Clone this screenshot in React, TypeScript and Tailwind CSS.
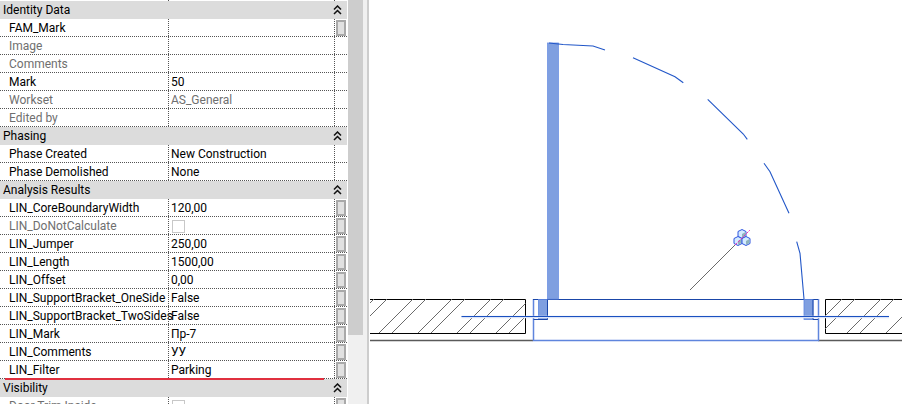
import type { JSX } from 'react';

type Row = { label: string; value?: string; muted?: boolean; button?: boolean; check?: boolean; mark?: boolean };
type Group = { title: string; rows: Row[] };

const groups: Group[] = [
  {
    title: 'Identity Data',
    rows: [
      { label: 'FAM_Mark', button: true },
      { label: 'Image', muted: true },
      { label: 'Comments', muted: true },
      { label: 'Mark', value: '50' },
      { label: 'Workset', value: 'AS_General', muted: true },
      { label: 'Edited by', muted: true },
    ],
  },
  {
    title: 'Phasing',
    rows: [
      { label: 'Phase Created', value: 'New Construction' },
      { label: 'Phase Demolished', value: 'None' },
    ],
  },
  {
    title: 'Analysis Results',
    rows: [
      { label: 'LIN_CoreBoundaryWidth', value: '120,00', button: true },
      { label: 'LIN_DoNotCalculate', muted: true, check: true, button: true },
      { label: 'LIN_Jumper', value: '250,00', button: true },
      { label: 'LIN_Length', value: '1500,00', button: true },
      { label: 'LIN_Offset', value: '0,00', button: true },
      { label: 'LIN_SupportBracket_OneSide', value: 'False', button: true },
      { label: 'LIN_SupportBracket_TwoSides', value: 'False', button: true },
      { label: 'LIN_Mark', value: 'Пр-7', button: true },
      { label: 'LIN_Comments', value: 'УУ', button: true },
      { label: 'LIN_Filter', value: 'Parking', button: true, mark: true },
    ],
  },
  {
    title: 'Visibility',
    rows: [{ label: 'Door Trim Inside', muted: true, check: true, button: true }],
  },
];

const dotted = 'border-dotted border-[#555]';

function Chevrons(): JSX.Element {
  return (
    <svg width="9" height="10" viewBox="0 0 9 10" fill="none" stroke="#111" strokeWidth="1.5">
      <path d="M1 4.5 4.5 1 8 4.5" />
      <path d="M1 9 4.5 5.5 8 9" />
    </svg>
  );
}

function Cells({ row }: { row?: Row }): JSX.Element {
  return (
    <div
      className={`relative flex h-[18px] shrink-0 border-b ${dotted} ${row?.muted ? 'text-[#6f6f6f]' : 'text-black'}`}
    >
      <div className="h-full w-[168px] shrink-0 pl-[9px] leading-[19px] whitespace-nowrap">{row?.label}</div>
      <div className={`h-full w-[166px] shrink-0 border-l ${dotted} pl-[2px] leading-[19px]`}>
        {row?.check ? <div className="mt-[3px] ml-[1px] size-[13px] border border-[#c8c8c8] bg-white" /> : row?.value}
      </div>
      <div className={`flex h-full flex-1 items-center justify-center border-l ${dotted}`}>
        {row?.button ? <div className="h-[16px] w-[10px] border-2 border-[#a9a9a9] bg-[#e1e1e1]" /> : null}
      </div>
      {row?.mark ? <div className="absolute top-[17px] left-[5px] h-[2px] w-[319px] bg-[#e0303f]" /> : null}
    </div>
  );
}

function PropertyPanel(): JSX.Element {
  return (
    <div className="flex h-full w-[347px] shrink-0 flex-col overflow-hidden">
      <div className="flex h-[1px] shrink-0">
        <div className="w-[168px]" />
        <div className={`w-[166px] border-l ${dotted}`} />
        <div className={`flex-1 border-l ${dotted}`} />
      </div>
      {groups.map((g) => (
        <div key={g.title} className="flex shrink-0 flex-col">
          <div className="flex h-[18px] shrink-0 items-center justify-between bg-[#dcdcdc] pr-[5px] pl-[3px] text-black">
            <span className="self-start leading-[19px]">{g.title}</span>
            <Chevrons />
          </div>
          {g.rows.map((r) => (
            <Cells key={r.label} row={r} />
          ))}
        </div>
      ))}
    </div>
  );
}

function Scrollbar(): JSX.Element {
  return (
    <div className="ml-[1px] flex h-full w-[19px] shrink-0 bg-[#f0f0f0]">
      <div className="h-[335px] w-[15px] bg-[#cdcdcd]" />
    </div>
  );
}

const hatches: number[][] = [
  [374, 299, 370, 303],
  [387, 299, 370, 316],
  [413, 299, 379, 333],
  [426, 299, 392, 333],
  [452, 299, 418, 333],
  [465, 299, 431, 333],
  [491, 299, 457, 333],
  [504, 299, 470, 333],
  [525.5, 303.5, 496, 333],
  [525.5, 316.5, 509, 333],
  [842, 299, 825, 316],
  [855, 299, 825, 329],
  [881, 299, 847, 333],
  [894, 299, 860, 333],
  [902, 317, 886, 333],
];

function Cube({ x, y }: { x: number; y: number }): JSX.Element {
  return (
    <g stroke="#2f55e0" strokeWidth="1">
      <path d={`M${x} ${y - 4.5} L${x + 4} ${y - 2.5} V${y + 2.5} L${x} ${y + 4.5} L${x - 4} ${y + 2.5} V${y - 2.5} Z`} fill="#d4ebff" />
      <path d={`M${x} ${y} V${y + 4} L${x + 3.5} ${y + 2} V${y - 2} Z`} fill="#8fb4bc" stroke="none" />
    </g>
  );
}

function Drawing(): JSX.Element {
  return (
    <svg className="h-full flex-1" viewBox="369 0 533 404" fill="none">
      {/* walls */}
      <g stroke="#000" strokeWidth="1">
        <path d="M370 299.5H525.5V333.5H370" />
        <path d="M902 299.5H825.5V333.5H902" />
      </g>
      <path d="M370 340.5H533M818 340.5H902" stroke="#5a5a5a" strokeWidth="1.5" />
      <g stroke="#6a6a6a" strokeWidth="1">
        {hatches.map(([x1, y1, x2, y2]) => (
          <line key={`${x1}-${y1}`} x1={x1} y1={y1} x2={x2} y2={y2} />
        ))}
      </g>

      {/* opening */}
      <path d="M533.5 299V340.5H818.5V299" stroke="#5f85dd" strokeWidth="1.5" />
      <path d="M533 299.5H818" stroke="#1a46a8" strokeWidth="1" />

      {/* door leaf and frames */}
      <rect x="547.5" y="43" width="11" height="256" fill="#7f9fe0" stroke="#6f92e4" strokeWidth="0.8" />
      <rect x="538.5" y="299.5" width="9" height="20" fill="#7f9fe0" stroke="#5d85e0" strokeWidth="0.8" />
      <rect x="804" y="299.5" width="9" height="20" fill="#7f9fe0" stroke="#5d85e0" strokeWidth="0.8" />
      <path d="M533.5 319.5H547.5V299.5M813 299.5V319.5H818" stroke="#1a46a8" strokeWidth="1" />
      <path d="M461.5 317H889" stroke="#dbe4f8" strokeWidth="2.5" />
      <path d="M461.5 316.5H889" stroke="#1a50c0" strokeWidth="1" />

      {/* door swing */}
      <g stroke="#2257c8" strokeWidth="1.1">
        <path d="M549 43 563 44.5 593 46 605 50" />
        <path d="M633 57.7 675 76.7 683.3 82.7" />
        <path d="M707.7 99.3 743.3 134 747.3 139.3" />
        <path d="M764 163.3 770 171.7 789 213.3" />
        <path d="M796.7 241.7 800 253.3 804 299" />
      </g>

      {/* family origin */}
      <path d="M690 290 735 245" stroke="#444" strokeWidth="0.8" />
      <Cube x={742} y={234} />
      <Cube x={738} y={241} />
      <Cube x={746} y={241} />
      <path d="M735 245 750 230" stroke="#f020b0" strokeWidth="0.9" strokeDasharray="3 1" />
    </svg>
  );
}

export default function App(): JSX.Element {
  return (
    <div className="flex h-[404px] w-[902px] overflow-hidden bg-white font-['Roboto',sans-serif] text-[12px]">
      <PropertyPanel />
      <Scrollbar />
      <div className="h-full w-[2px] shrink-0 bg-[#cdcdcd]" />
      <Drawing />
    </div>
  );
}
